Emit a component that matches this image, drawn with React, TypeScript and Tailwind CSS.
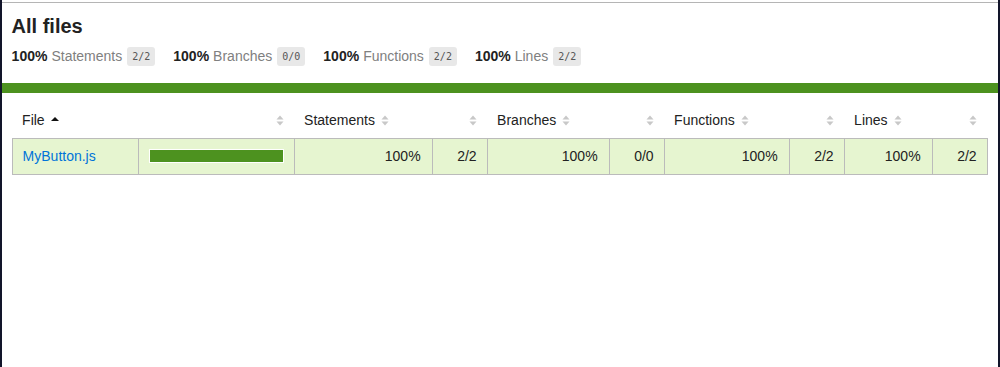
import React from "react";

const font = { fontFamily: '"Liberation Sans", Arial, sans-serif' };

function Sorter({ active = false }: { active?: boolean }) {
  if (active) {
    return (
      <svg width="8" height="10" viewBox="0 0 8 10" className="inline-block ml-[6px] align-[1px]">
        <path d="M0 7 L4 3 L8 7 Z" fill="#111" />
      </svg>
    );
  }
  return (
    <svg width="8" height="11" viewBox="0 0 8 11" className="inline-block ml-[6px] align-[-1px]">
      <path d="M0.5 4.5 L4 0.5 L7.5 4.5 Z" fill="#c8c8c8" />
      <path d="M0.5 6.5 L4 10.5 L7.5 6.5 Z" fill="#c8c8c8" />
    </svg>
  );
}

function Stat({ label, frac }: { label: string; frac: string }) {
  return (
    <div className="flex items-center mr-[18px]">
      <span className="font-bold text-[#222]">100%</span>
      <span className="ml-[4px] text-[#808080]">{label}</span>
      <span
        className="ml-[5px] bg-[#e8e8e8] text-[#555] text-[10px] px-[5px] h-[19px] leading-[19px] rounded-[3px]"
        style={{ fontFamily: '"DejaVu Sans Mono", "Liberation Mono", monospace' }}
      >
        {frac}
      </span>
    </div>
  );
}

const metrics = [
  { name: "Statements", pct: "w-[138px]", abs: "2/2" },
  { name: "Branches", pct: "w-[122px]", abs: "0/0" },
  { name: "Functions", pct: "w-[125px]", abs: "2/2" },
  { name: "Lines", pct: "w-[88px]", abs: "2/2" },
];

export default function App() {
  return (
    <div className="flex h-[367px] bg-white text-[14px] text-[#333]" style={font}>
      <div className="w-[2px] bg-[#12152a]" />
      <div className="flex-1 flex flex-col">
        <div className="h-[2px] bg-white" />
        <div className="border-t border-[#b5b5b5]">
          <div className="px-[10px] pt-[11px] pb-[16px]">
            <h1 className="text-[20px] font-bold leading-[24px] text-[#222]">All files</h1>
            <div className="flex items-center mt-[8px]">
              <Stat label="Statements" frac="2/2" />
              <Stat label="Branches" frac="0/0" />
              <Stat label="Functions" frac="2/2" />
              <Stat label="Lines" frac="2/2" />
            </div>
          </div>
          <div className="h-[10px] bg-[#4d921f]" />
          <div className="px-[10px] pt-[9px]">
            <table className="border-collapse table-fixed w-[975px]">
              <thead>
                <tr className="h-[36px]">
                  <th className="w-[126px] text-left font-normal px-[10px] pt-[2px] text-[#222]">
                    File
                    <Sorter active />
                  </th>
                  <th className="w-[156px] text-right font-normal px-[10px] pt-[2px]">
                    <Sorter />
                  </th>
                  {metrics.map((m) => (
                    <React.Fragment key={m.name}>
                      <th className={`${m.pct} text-left font-normal px-[10px] pt-[2px] text-[#222]`}>
                        {m.name}
                        <Sorter />
                      </th>
                      <th className="w-[55px] text-right font-normal px-[10px] pt-[2px]">
                        <Sorter />
                      </th>
                    </React.Fragment>
                  ))}
                </tr>
              </thead>
              <tbody>
                <tr className="h-[36px] bg-[#e6f5d0]">
                  <td className="border border-[#bbb] px-[10px] text-[#0074d9]">MyButton.js</td>
                  <td className="border border-[#bbb] px-[10px]">
                    <div className="h-[14px] border border-white bg-[#4d921f]" />
                  </td>
                  {metrics.map((m) => (
                    <React.Fragment key={m.name}>
                      <td className="border border-[#bbb] px-[11px] text-right text-[#222]">100%</td>
                      <td className="border border-[#bbb] px-[10px] text-right text-[#222]">{m.abs}</td>
                    </React.Fragment>
                  ))}
                </tr>
              </tbody>
            </table>
          </div>
        </div>
      </div>
      <div className="w-[3px] bg-[#12152a]" />
    </div>
  );
}
